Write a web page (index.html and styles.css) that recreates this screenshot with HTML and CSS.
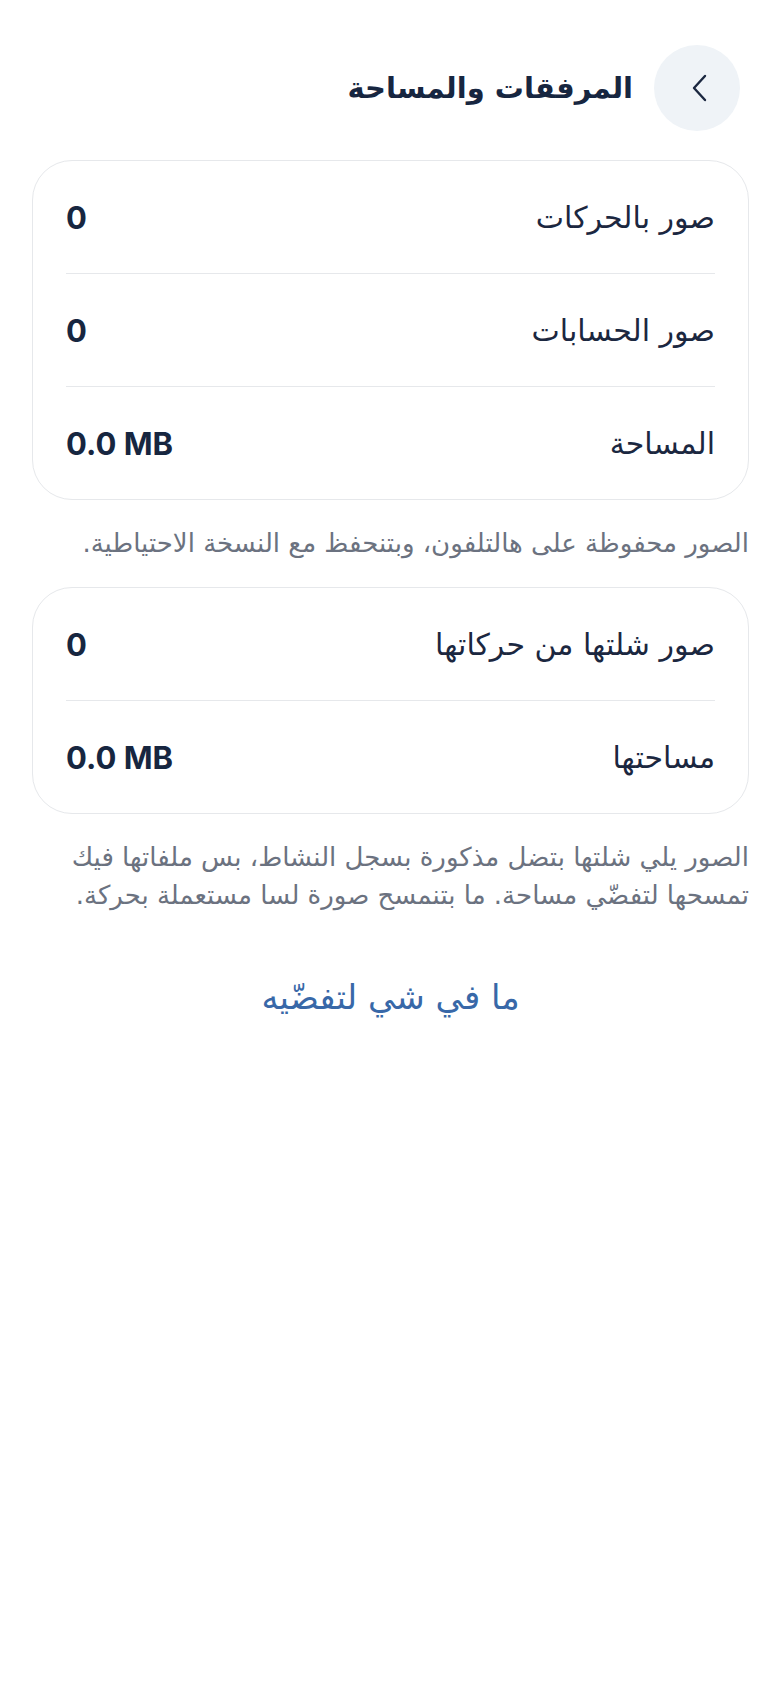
FILE: index.html
```html
<!DOCTYPE html>
<html lang="ar" dir="rtl">
<head>
<meta charset="utf-8">
<link rel="stylesheet" href="styles.css">
</head>
<body>
<div class="page">
  <header class="header">
    <button class="back" aria-label="رجوع">
      <svg width="18" height="28" viewBox="0 0 18 28"><path d="M15 2 L4 14 L15 26" fill="none" stroke="#1b2740" stroke-width="2.4" stroke-linecap="round" stroke-linejoin="round"/></svg>
    </button>
    <h1 class="title">المرفقات والمساحة</h1>
  </header>

  <section class="card">
    <div class="row"><span class="label">صور بالحركات</span><span class="value">0</span></div>
    <div class="row"><span class="label">صور الحسابات</span><span class="value">0</span></div>
    <div class="row"><span class="label">المساحة</span><span class="value">0.0 MB</span></div>
  </section>
  <p class="note">الصور محفوظة على هالتلفون، وبتنحفظ مع النسخة الاحتياطية.</p>

  <section class="card">
    <div class="row"><span class="label">صور شلتها من حركاتها</span><span class="value">0</span></div>
    <div class="row"><span class="label">مساحتها</span><span class="value">0.0 MB</span></div>
  </section>
  <p class="note">الصور يلي شلتها بتضل مذكورة بسجل النشاط، بس ملفاتها فيك تمسحها لتفضّي مساحة. ما بتنمسح صورة لسا مستعملة بحركة.</p>

  <div class="empty">ما في شي لتفضّيه</div>
</div>
</body>
</html>
```

FILE: styles.css
```css
html, body {
  margin: 0;
  padding: 0;
  background: #ffffff;
}
body {
  width: 780px;
  min-height: 1688px;
  font-family: "DejaVu Sans", sans-serif;
  color: #1b2740;
}
.page {
  padding: 45px 31px 0 32px;
}
.header {
  display: flex;
  align-items: center;
  gap: 21px;
  padding-right: 9px;
  height: 86px;
}
.back {
  width: 86px;
  height: 86px;
  border-radius: 50%;
  border: none;
  background: #eff3f7;
  display: flex;
  align-items: center;
  justify-content: center;
  padding: 0;
  padding-left: 4px;
  flex: none;
}
.title {
  margin: 0;
  font-size: 29px;
  font-weight: 700;
  color: #172640;
}
.card {
  margin-top: 29px;
  border: 1.5px solid #e6e8eb;
  border-radius: 40px;
  padding: 0 33px;
  background: #fff;
}
.row {
  display: flex;
  justify-content: space-between;
  align-items: center;
  height: 112px;
  border-bottom: 1.5px solid #e6e8eb;
}
.row:last-child {
  border-bottom: none;
}
.label {
  font-size: 30px;
  color: #1b2740;
}
.value {
  font-family: "Inter", "Roboto", sans-serif;
  font-weight: 700;
  font-size: 31px;
  color: #172640;
  direction: ltr;
}
.note {
  margin: 24px 0 0 0;
  font-size: 26px;
  line-height: 38px;
  color: #6b7280;
}
.note + .card {
  margin-top: 25px;
}
.empty {
  margin-top: 63px;
  text-align: center;
  font-size: 34px;
  color: #3868a8;
}
```
